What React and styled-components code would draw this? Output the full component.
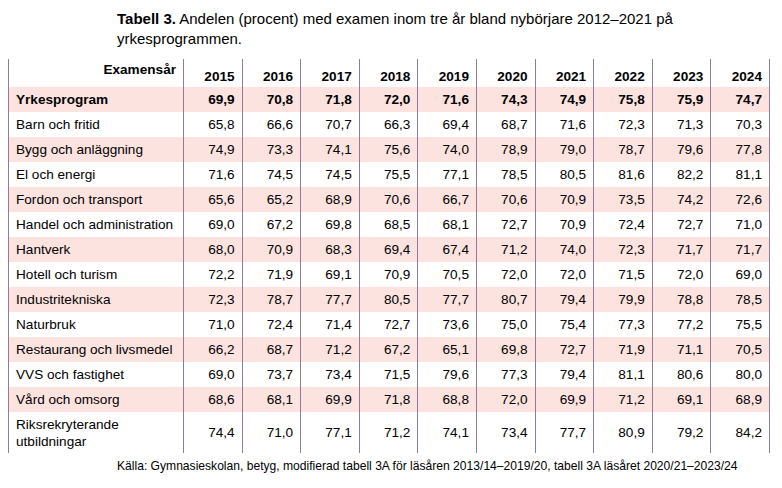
import React from 'react'
import styled, { createGlobalStyle } from 'styled-components'

const GlobalStyle = createGlobalStyle`
    body {
        margin: 0;
        background: #fff;
        font-family: "Liberation Sans", Arial, sans-serif;
        color: #000;
    }
`

const Page = styled.div`
    padding: 9px 8px 0;
`

const Title = styled.h1`
    margin: 0 0 10px;
    padding-left: 109px;
    font-size: 15px;
    line-height: 20px;
    font-weight: 400;
    max-width: 600px;
`

const Table = styled.table`
    border-collapse: collapse;
    table-layout: fixed;
    width: 762px;
    font-size: 13.6px;
`

const Cell = styled.td`
    border-left: 1px solid #8e7a9a;
    border-right: 1px solid #8e7a9a;
    padding: 0 7px;
    text-align: ${p => (p.$label ? 'left' : 'right')};
    vertical-align: middle;
    white-space: ${p => (p.$wrap ? 'normal' : 'nowrap')};
    line-height: 17px;
`

const HeadCell = styled.th`
    border-left: 1px solid #8e7a9a;
    border-right: 1px solid #8e7a9a;
    padding: ${p => (p.$top ? '3px 7px 0' : '0 7px 2px')};
    text-align: right;
    vertical-align: ${p => (p.$top ? 'top' : 'bottom')};
    font-weight: 700;
    line-height: 16px;
`

const HeadRow = styled.tr`
    height: 28px;
`

const Row = styled.tr`
    height: ${p => (p.$tall ? '41px' : '25px')};
    background: ${p => (p.$shade ? '#fce3df' : 'transparent')};
    font-weight: ${p => (p.$bold ? 700 : 400)};
`

const Caption = styled.p`
    margin: 5px 0 0;
    padding-left: 109px;
    font-size: 12.1px;
    line-height: 16px;
`

const years = [2015, 2016, 2017, 2018, 2019, 2020, 2021, 2022, 2023, 2024]

const rows = [
    ['Yrkesprogram', '69,9 70,8 71,8 72,0 71,6 74,3 74,9 75,8 75,9 74,7'],
    ['Barn och fritid', '65,8 66,6 70,7 66,3 69,4 68,7 71,6 72,3 71,3 70,3'],
    ['Bygg och anläggning', '74,9 73,3 74,1 75,6 74,0 78,9 79,0 78,7 79,6 77,8'],
    ['El och energi', '71,6 74,5 74,5 75,5 77,1 78,5 80,5 81,6 82,2 81,1'],
    ['Fordon och transport', '65,6 65,2 68,9 70,6 66,7 70,6 70,9 73,5 74,2 72,6'],
    ['Handel och administration', '69,0 67,2 69,8 68,5 68,1 72,7 70,9 72,4 72,7 71,0'],
    ['Hantverk', '68,0 70,9 68,3 69,4 67,4 71,2 74,0 72,3 71,7 71,7'],
    ['Hotell och turism', '72,2 71,9 69,1 70,9 70,5 72,0 72,0 71,5 72,0 69,0'],
    ['Industritekniska', '72,3 78,7 77,7 80,5 77,7 80,7 79,4 79,9 78,8 78,5'],
    ['Naturbruk', '71,0 72,4 71,4 72,7 73,6 75,0 75,4 77,3 77,2 75,5'],
    ['Restaurang och livsmedel', '66,2 68,7 71,2 67,2 65,1 69,8 72,7 71,9 71,1 70,5'],
    ['VVS och fastighet', '69,0 73,7 73,4 71,5 79,6 77,3 79,4 81,1 80,6 80,0'],
    ['Vård och omsorg', '68,6 68,1 69,9 71,8 68,8 72,0 69,9 71,2 69,1 68,9'],
    ['Riksrekryterande utbildningar', '74,4 71,0 77,1 71,2 74,1 73,4 77,7 80,9 79,2 84,2'],
]

export default function App() {
    return (
        <Page>
            <GlobalStyle />
            <Title>
                <strong>Tabell 3.</strong> Andelen (procent) med examen inom tre år bland nybörjare 2012–2021 på yrkesprogrammen.
            </Title>
            <Table>
                <colgroup>
                    <col style={{ width: 175 }} />
                    {years.map(y => <col key={y} />)}
                </colgroup>
                <thead>
                    <HeadRow>
                        <HeadCell $top>Examensår</HeadCell>
                        {years.map(y => <HeadCell key={y}>{y}</HeadCell>)}
                    </HeadRow>
                </thead>
                <tbody>
                    {rows.map(([label, values], i) => (
                        <Row key={label} $shade={i % 2 === 0} $bold={i === 0} $tall={i === rows.length - 1}>
                            <Cell $label $wrap>{label}</Cell>
                            {values.split(' ').map((v, j) => <Cell key={j}>{v}</Cell>)}
                        </Row>
                    ))}
                </tbody>
            </Table>
            <Caption>
                Källa: Gymnasieskolan, betyg, modifierad tabell 3A för läsåren 2013/14–2019/20, tabell 3A läsåret 2020/21–2023/24
            </Caption>
        </Page>
    )
}
